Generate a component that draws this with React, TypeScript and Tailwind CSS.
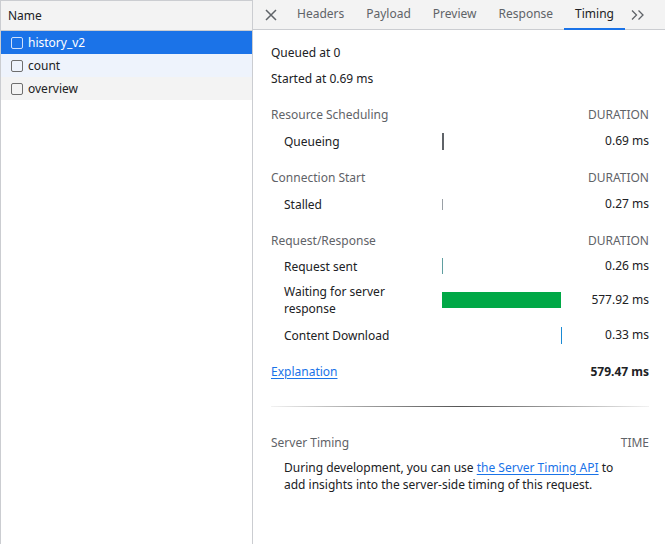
import React from "react";

const font = { fontFamily: '"Segoe UI", "Noto Sans", sans-serif' };

const rows = [
  { name: "history_v2", bg: "bg-[#1b73e8] text-white", box: "border-[#cfe0fb]" },
  { name: "count", bg: "bg-[#eef3fc] text-[#202124]", box: "border-[#6e6e6e]" },
  { name: "overview", bg: "bg-[#f3f3f3] text-[#202124]", box: "border-[#6e6e6e]" },
];

const tabs = ["Headers", "Payload", "Preview", "Response", "Timing"];

type Bar = { left: number; width: number; color: string; h: number };

function TimingRow({ label, value, bar, h = "h-[26px]" }: { label: React.ReactNode; value: string; bar: Bar; h?: string }) {
  return (
    <div className={`flex items-center ${h}`}>
      <div className="w-[171px] pl-[13px] leading-[17px] text-[#202124]">{label}</div>
      <div className="relative w-[120px] h-full flex items-center">
        <div
          className="absolute"
          style={{ left: bar.left, width: bar.width, height: bar.h, background: bar.color }}
        />
      </div>
      <div className="flex-1 text-right text-[#202124]">{value}</div>
    </div>
  );
}

function Section({ title, right = "DURATION" }: { title: string; right?: string }) {
  return (
    <div className="flex items-center justify-between h-[26px] text-[#5f6368]">
      <span>{title}</span>
      <span>{right}</span>
    </div>
  );
}

export default function App() {
  return (
    <div className="flex w-[665px] h-[544px] bg-white text-[12px] overflow-hidden" style={font}>
      {/* request list */}
      <div className="w-[253px] h-full border-l border-t border-r border-[#cbcdd1] flex flex-col">
        <div className="h-[30px] bg-[#f3f3f3] border-b border-[#cbcdd1] flex items-center pl-[7px] text-[#202124]">
          Name
        </div>
        {rows.map((r) => (
          <div key={r.name} className={`h-[23px] flex items-center gap-[5px] pl-[10px] ${r.bg}`}>
            <span className={`w-[12px] h-[12px] border rounded-[2px] ${r.box}`} />
            <span>{r.name}</span>
          </div>
        ))}
      </div>

      {/* details */}
      <div className="flex-1 flex flex-col">
        <div className="h-[30px] bg-[#f3f3f3] border-b border-[#cbcdd1] flex items-stretch">
          <div className="w-[33px] pl-[2px] flex items-center justify-center text-[#5f6368]">
            <svg width="12" height="12" viewBox="0 0 12 12">
              <path d="M1 1L11 11M11 1L1 11" stroke="currentColor" strokeWidth="1.5" />
            </svg>
          </div>
          {tabs.map((t) => (
            <div
              key={t}
              className={`px-[11px] flex items-center border-b-2 -mb-px ${
                t === "Timing" ? "border-[#1a73e8] text-[#202124]" : "border-transparent text-[#5f6368]"
              }`}
            >
              {t}
            </div>
          ))}
          <div className="flex items-center pl-[5px] text-[#5f6368]">
            <svg width="16" height="12" viewBox="0 0 16 12">
              <path d="M2 1.5L6.5 6L2 10.5M8.5 1.5L13 6L8.5 10.5" stroke="currentColor" strokeWidth="1.3" fill="none" />
            </svg>
          </div>
        </div>

        <div className="pl-[18px] pr-[16px] pt-[10px] flex flex-col">
          <div className="h-[26px] flex items-center text-[#202124]">Queued at 0</div>
          <div className="h-[26px] flex items-center text-[#202124]">Started at 0.69 ms</div>

          <div className="mt-[10px]">
            <Section title="Resource Scheduling" />
            <TimingRow label="Queueing" value="0.69 ms" bar={{ left: 0, width: 2, h: 17, color: "#5f6368" }} />
          </div>

          <div className="mt-[11px]">
            <Section title="Connection Start" />
            <TimingRow label="Stalled" value="0.27 ms" bar={{ left: 0, width: 1, h: 11, color: "#9aa0a6" }} />
          </div>

          <div className="mt-[11px]">
            <Section title="Request/Response" />
            <TimingRow
              h="h-[24px]"
              label="Request sent"
              value="0.26 ms"
              bar={{ left: 0, width: 1, h: 16, color: "#5f9ea0" }}
            />
            <TimingRow
              h="h-[44px]"
              label={<>Waiting for server<br />response</>}
              value="577.92 ms"
              bar={{ left: 0, width: 119, h: 16, color: "#00a846" }}
            />
            <TimingRow label="Content Download" value="0.33 ms" bar={{ left: 119, width: 1, h: 17, color: "#1a8ad4" }} />
          </div>

          <div className="mt-[11px] h-[26px] flex items-center justify-between">
            <a className="text-[#1a73e8] underline underline-offset-2">Explanation</a>
            <span className="font-bold text-[#202124]">579.47 ms</span>
          </div>

          <div className="mt-[21px] h-px bg-linear-to-r from-[#f2f2f2] via-[#555] to-[#f2f2f2]" />

          <div className="mt-[23px]">
            <Section title="Server Timing" right="TIME" />
            <p className="pl-[13px] pr-[20px] pt-[3px] leading-[17px] text-[#202124]">
              During development, you can use{" "}
              <a className="text-[#1a73e8] underline underline-offset-2">the Server Timing API</a> to add insights
              into the server-side timing of this request.
            </p>
          </div>
        </div>
      </div>
    </div>
  );
}
